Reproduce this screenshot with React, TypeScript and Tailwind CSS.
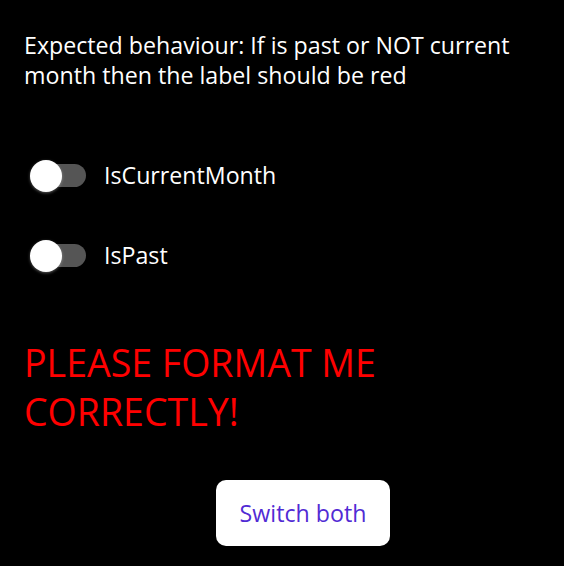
import { useState } from 'react';

function Toggle({ on, onChange }: { on: boolean; onChange: () => void }) {
  return (
    <button onClick={onChange} className="relative w-[58px] h-[34px] shrink-0">
      <span className={`absolute left-[8px] right-[0px] top-[6px] h-[23px] rounded-full ${on ? 'bg-[#9880e5]' : 'bg-[#555555]'}`} />
      <span
        className={`absolute top-[2px] w-[32px] h-[32px] rounded-full bg-white shadow-[0_1px_3px_rgba(255,255,255,0.35)] ${on ? 'left-[26px]' : 'left-[2px]'}`}
      />
    </button>
  );
}

export default function App() {
  const [isCurrentMonth, setIsCurrentMonth] = useState(false);
  const [isPast, setIsPast] = useState(false);

  const isRed = isPast || !isCurrentMonth;

  return (
    <div className="w-[564px] h-[566px] bg-black text-white overflow-hidden" style={{ fontFamily: '"Open Sans", sans-serif' }}>
      <div className="pl-[24px] pr-[20px] pt-[30px]">
        <p className="text-[23.2px] leading-[30px]">
          Expected behaviour: If is past or NOT current month then the label should be red
        </p>

        <div className="mt-[68px] flex items-center gap-[18px] pl-[4px] h-[34px]">
          <Toggle on={isCurrentMonth} onChange={() => setIsCurrentMonth(!isCurrentMonth)} />
          <span className="text-[23.2px] leading-[30px]">IsCurrentMonth</span>
        </div>

        <div className="mt-[46px] flex items-center gap-[18px] pl-[4px] h-[34px]">
          <Toggle on={isPast} onChange={() => setIsPast(!isPast)} />
          <span className="text-[23.2px] leading-[30px]">IsPast</span>
        </div>

        <p className={`mt-[66px] text-[37.5px] leading-[49px] ${isRed ? 'text-[#ff0000]' : 'text-white'}`}>
          PLEASE FORMAT ME CORRECTLY!
        </p>

        <button
          onClick={() => {
            setIsCurrentMonth(!isCurrentMonth);
            setIsPast(!isPast);
          }}
          className="mt-[44px] ml-[192px] w-[174px] h-[66px] rounded-[10px] bg-white text-[#512bd4] text-[23.2px] leading-[30px]"
        >
          Switch both
        </button>
      </div>
    </div>
  );
}
